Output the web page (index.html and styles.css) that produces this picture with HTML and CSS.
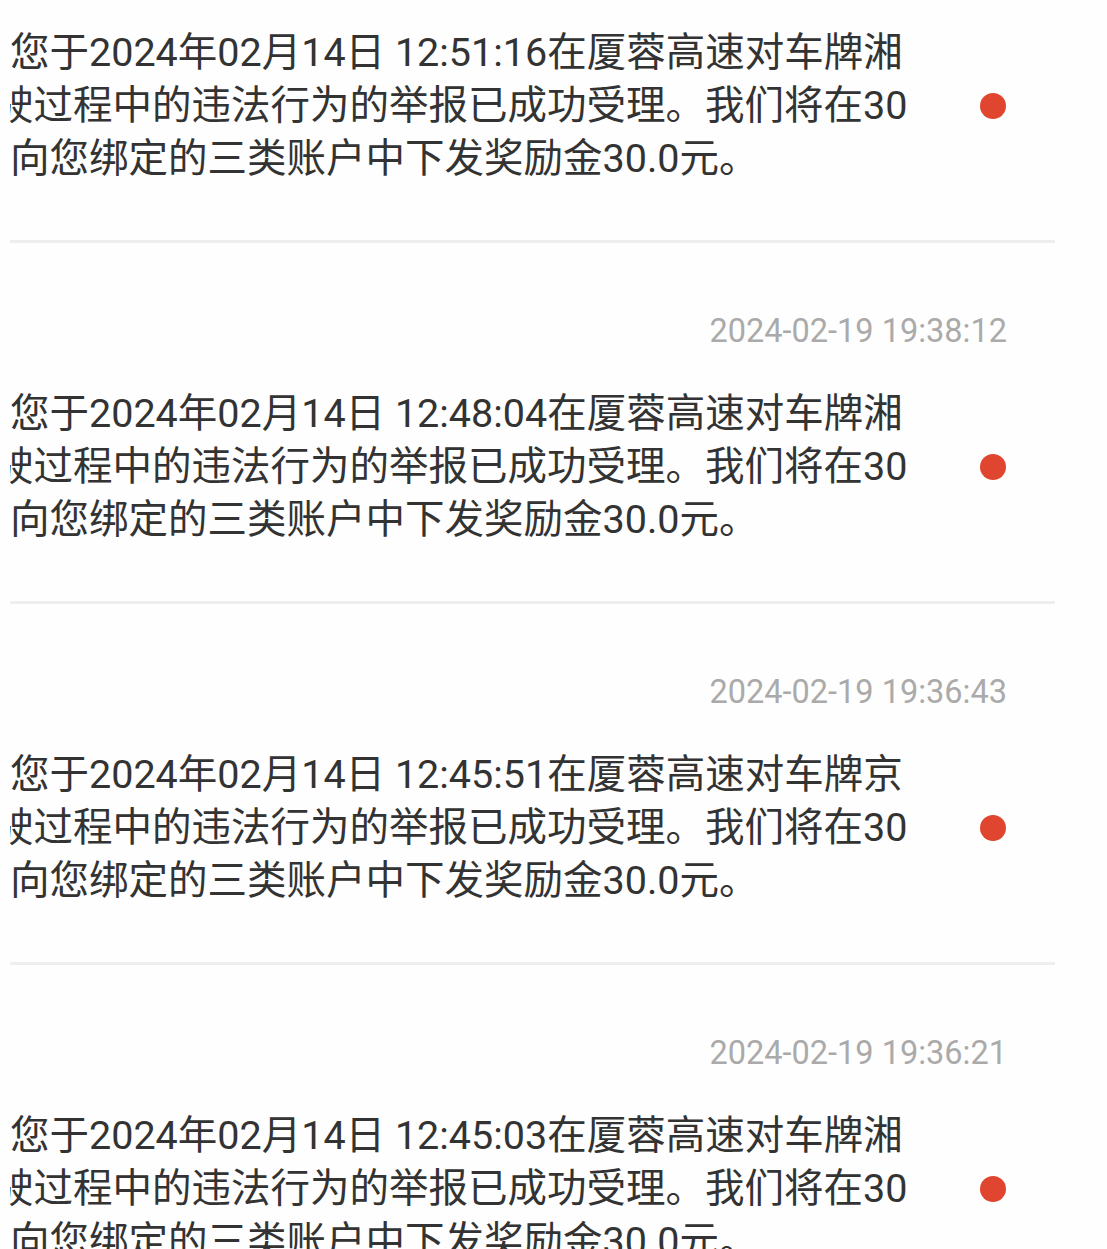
FILE: index.html
```html
<!DOCTYPE html>
<html lang="zh-CN">
<head>
    <meta charset="UTF-8">
    <meta name="viewport" content="width=device-width, initial-scale=1.0">
    <title>消息通知</title>
    <link rel="stylesheet" href="styles.css">
</head>
<body>
    <div class="msg-list">
        <div class="msg-item first">
            <div class="msg-body">
                <div class="msg-text">
                    <p>您于2024年02月14日 12:51:16在厦蓉高速对车牌湘</p>
                    <p class="cut">驶过程中的违法行为的举报已成功受理。我们将在30</p>
                    <p>向您绑定的三类账户中下发奖励金30.0元。</p>
                </div>
                <span class="dot"></span>
            </div>
        </div>

        <div class="msg-item">
            <div class="msg-time">2024-02-19 19:38:12</div>
            <div class="msg-body">
                <div class="msg-text">
                    <p>您于2024年02月14日 12:48:04在厦蓉高速对车牌湘</p>
                    <p class="cut">驶过程中的违法行为的举报已成功受理。我们将在30</p>
                    <p>向您绑定的三类账户中下发奖励金30.0元。</p>
                </div>
                <span class="dot"></span>
            </div>
        </div>

        <div class="msg-item">
            <div class="msg-time">2024-02-19 19:36:43</div>
            <div class="msg-body">
                <div class="msg-text">
                    <p>您于2024年02月14日 12:45:51在厦蓉高速对车牌京</p>
                    <p class="cut">驶过程中的违法行为的举报已成功受理。我们将在30</p>
                    <p>向您绑定的三类账户中下发奖励金30.0元。</p>
                </div>
                <span class="dot"></span>
            </div>
        </div>

        <div class="msg-item">
            <div class="msg-time">2024-02-19 19:36:21</div>
            <div class="msg-body">
                <div class="msg-text">
                    <p>您于2024年02月14日 12:45:03在厦蓉高速对车牌湘</p>
                    <p class="cut">驶过程中的违法行为的举报已成功受理。我们将在30</p>
                    <p>向您绑定的三类账户中下发奖励金30.0元。</p>
                </div>
                <span class="dot"></span>
            </div>
        </div>
    </div>
</body>
</html>
```

FILE: styles.css
```css
* {
    margin: 0;
    padding: 0;
    box-sizing: border-box;
}

html, body {
    height: 100%;
    overflow: hidden;
}

body {
    background-color: #fefefe;
    font-family: Roboto, "Noto Sans CJK SC", sans-serif;
}

.msg-list {
    width: 1045px;
    margin-left: 10px;
}

.msg-item {
    padding: 68px 0 55px;
    border-bottom: 3px solid #eeeef1;
}

.msg-item.first {
    padding-top: 26px;
}

.msg-time {
    height: 40px;
    line-height: 40px;
    padding-right: 48px;
    text-align: right;
    font-size: 32.5px;
    color: #aaaaaa;
}

.msg-time + .msg-body {
    margin-top: 36px;
}

.msg-body {
    display: flex;
    align-items: center;
}

.msg-text {
    flex: 1;
    overflow: hidden;
}

.msg-text p {
    height: 53px;
    line-height: 53px;
    font-size: 39.5px;
    color: #333333;
    white-space: nowrap;
}

.msg-text p.cut {
    margin-left: -16px;
}

.dot {
    flex-shrink: 0;
    width: 26px;
    height: 26px;
    margin: 0 49px 0 40px;
    border-radius: 50%;
    background-color: #e0462f;
}
```
